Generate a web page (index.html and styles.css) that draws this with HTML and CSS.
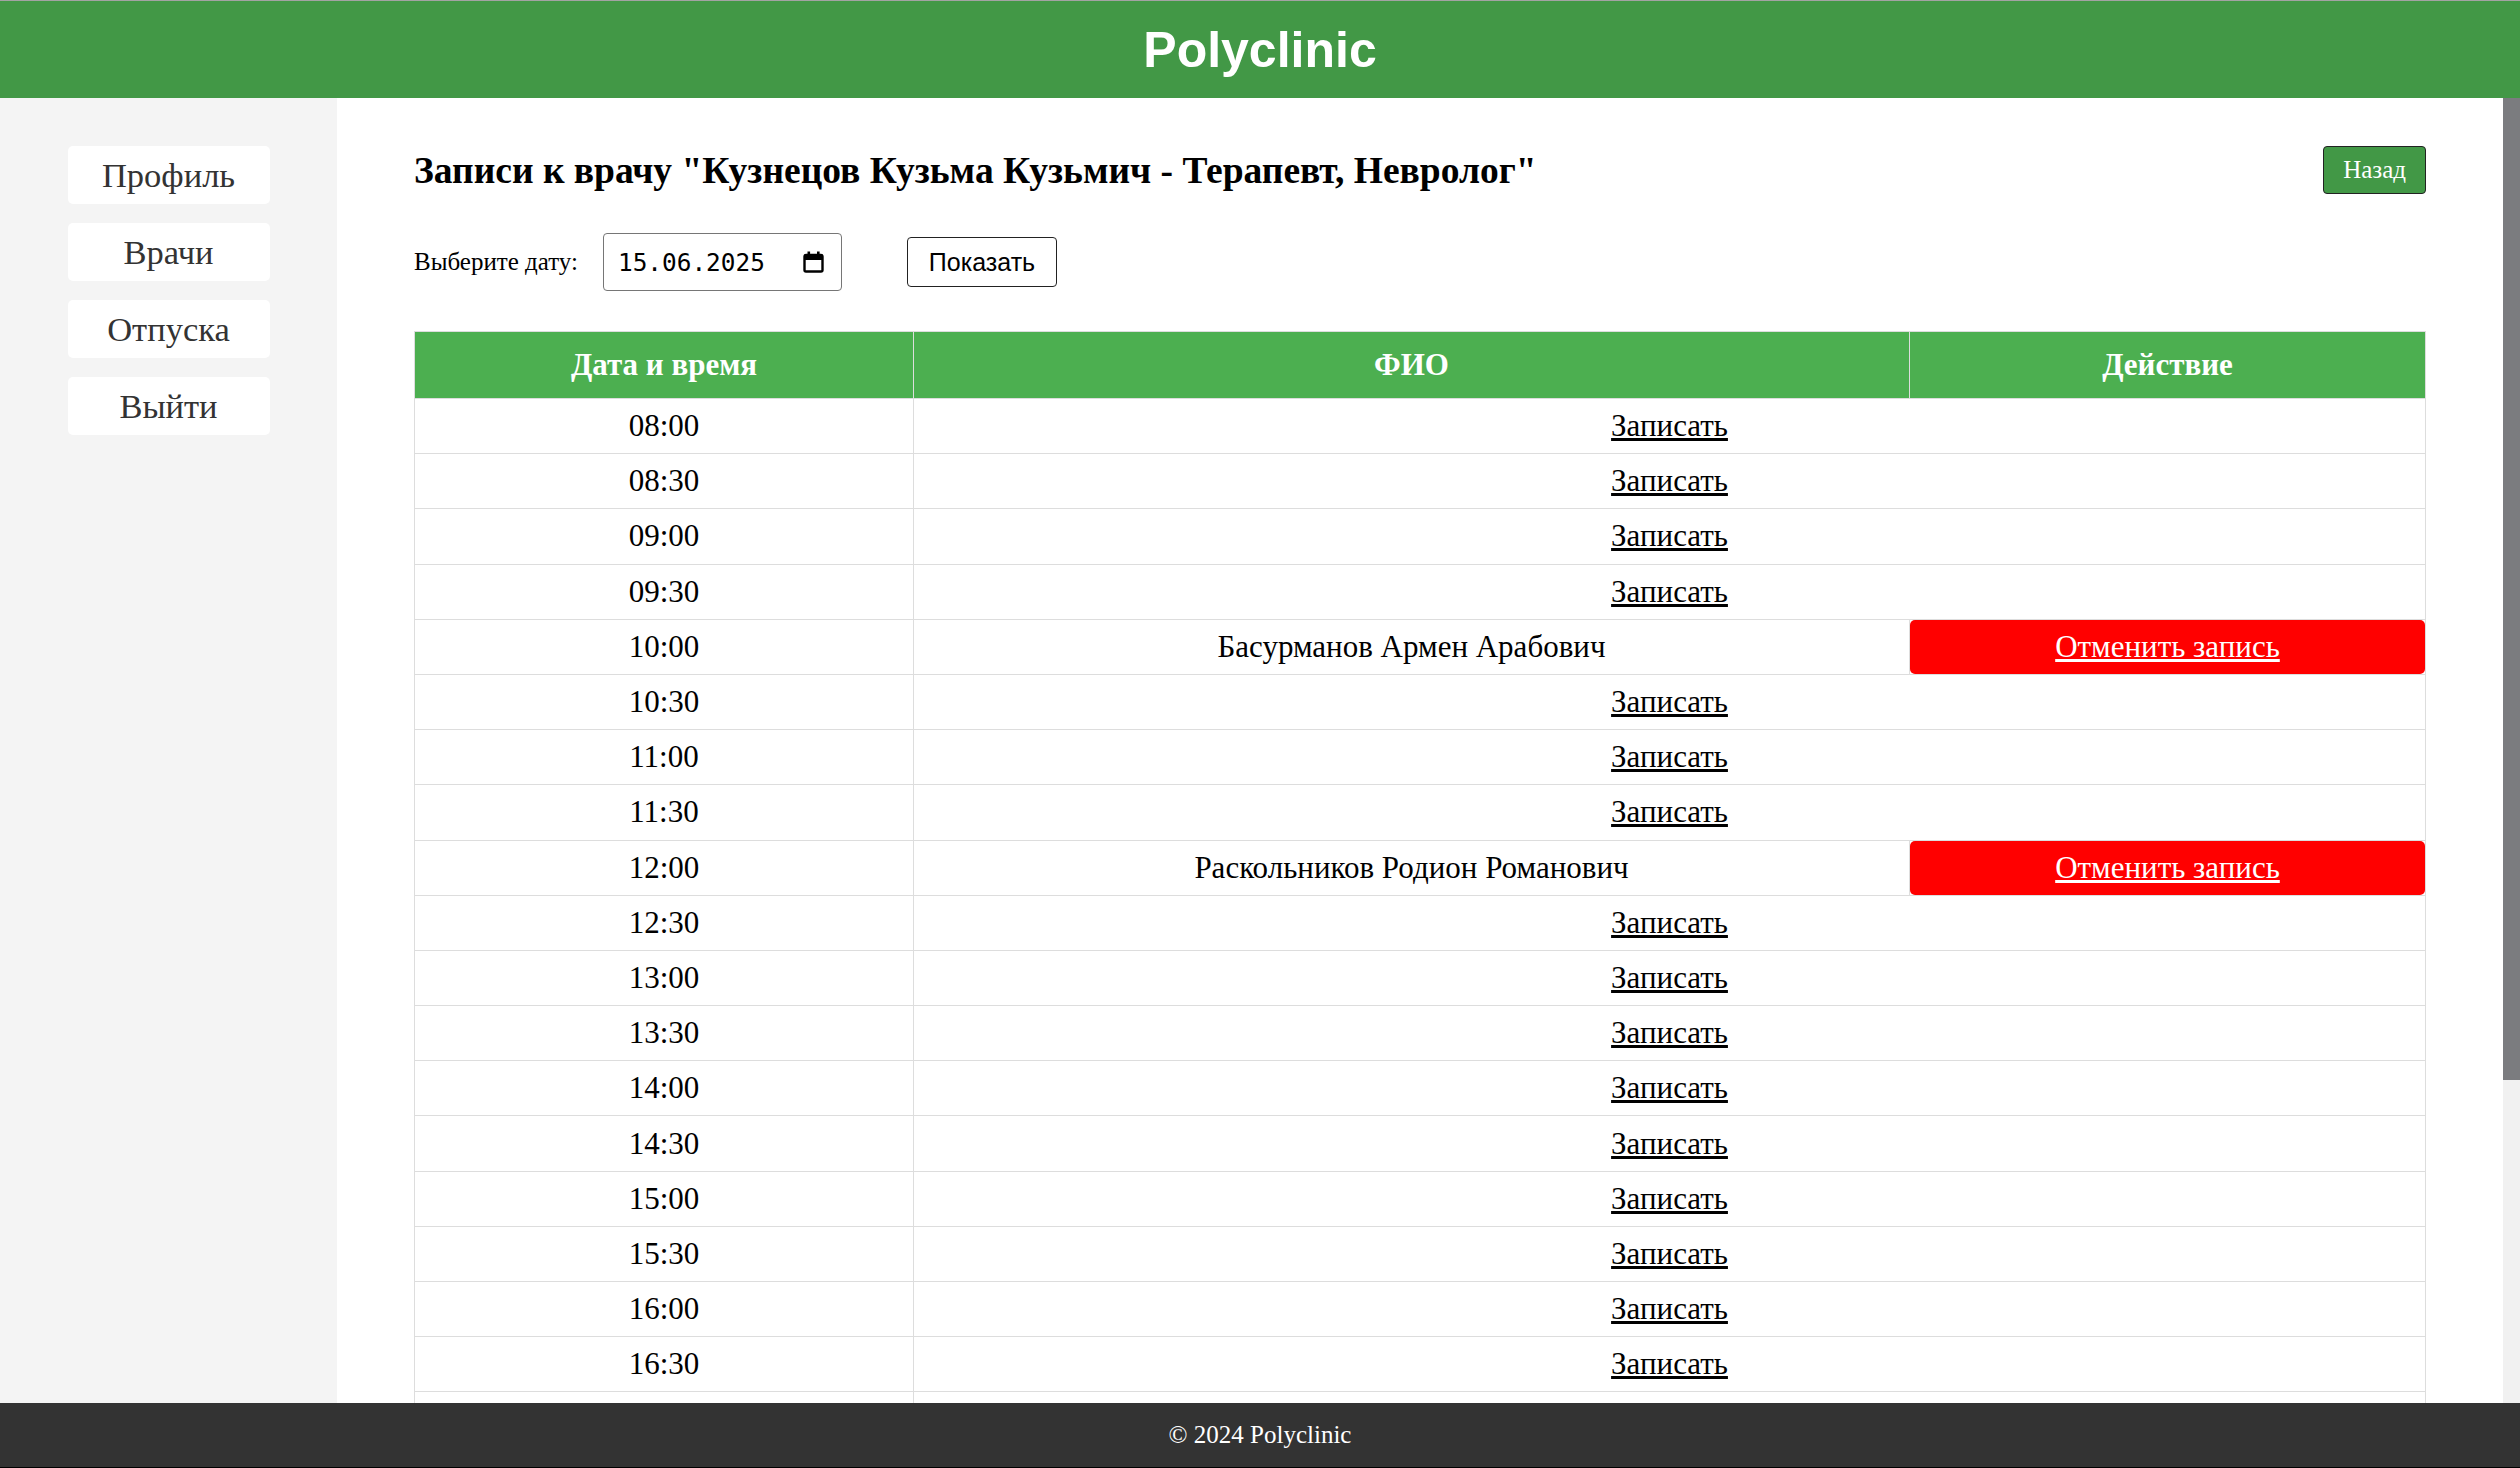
FILE: index.html
```html
<!DOCTYPE html>
<html lang="ru">
<head>
<meta charset="utf-8">
<title>Polyclinic</title>
<link rel="stylesheet" href="styles.css">
</head>
<body>
<header class="topbar">
  <h1 class="brand">Polyclinic</h1>
</header>
<div class="viewport">
  <div class="layout">
    <nav class="sidebar">
      <a class="nav-btn" href="#">Профиль</a>
      <a class="nav-btn" href="#">Врачи</a>
      <a class="nav-btn" href="#">Отпуска</a>
      <a class="nav-btn" href="#">Выйти</a>
    </nav>
    <main class="content">
      <div class="title-row">
        <h2 class="page-title">Записи к врачу "Кузнецов Кузьма Кузьмич - Терапевт, Невролог"</h2>
        <a class="back-btn" href="#">Назад</a>
      </div>
      <form class="date-form">
        <label class="date-label">Выберите дату:</label>
        <div class="date-input">
          <span class="date-value">15.06.2025</span>
          <svg class="cal-icon" width="21" height="22" viewBox="0 0 21 22">
            <rect x="1.5" y="4" width="18" height="16.5" rx="1.5" fill="none" stroke="#000" stroke-width="2.4"/>
            <rect x="1.5" y="4" width="18" height="5" fill="#000"/>
            <rect x="4.5" y="0.5" width="2.6" height="4" fill="#000"/>
            <rect x="14" y="0.5" width="2.6" height="4" fill="#000"/>
          </svg>
        </div>
        <button class="show-btn" type="button">Показать</button>
      </form>
      <table class="schedule">
        <colgroup>
          <col class="col-time"><col class="col-name"><col class="col-action">
        </colgroup>
        <thead>
          <tr><th>Дата и время</th><th>ФИО</th><th>Действие</th></tr>
        </thead>
        <tbody>
          <tr><td>08:00</td><td colspan="2"><a class="book" href="#">Записать</a></td></tr>
          <tr><td>08:30</td><td colspan="2"><a class="book" href="#">Записать</a></td></tr>
          <tr><td>09:00</td><td colspan="2"><a class="book" href="#">Записать</a></td></tr>
          <tr><td>09:30</td><td colspan="2"><a class="book" href="#">Записать</a></td></tr>
          <tr><td>10:00</td><td>Басурманов Армен Арабович</td><td class="action-cell"><a class="cancel" href="#">Отменить запись</a></td></tr>
          <tr><td>10:30</td><td colspan="2"><a class="book" href="#">Записать</a></td></tr>
          <tr><td>11:00</td><td colspan="2"><a class="book" href="#">Записать</a></td></tr>
          <tr><td>11:30</td><td colspan="2"><a class="book" href="#">Записать</a></td></tr>
          <tr><td>12:00</td><td>Раскольников Родион Романович</td><td class="action-cell"><a class="cancel" href="#">Отменить запись</a></td></tr>
          <tr><td>12:30</td><td colspan="2"><a class="book" href="#">Записать</a></td></tr>
          <tr><td>13:00</td><td colspan="2"><a class="book" href="#">Записать</a></td></tr>
          <tr><td>13:30</td><td colspan="2"><a class="book" href="#">Записать</a></td></tr>
          <tr><td>14:00</td><td colspan="2"><a class="book" href="#">Записать</a></td></tr>
          <tr><td>14:30</td><td colspan="2"><a class="book" href="#">Записать</a></td></tr>
          <tr><td>15:00</td><td colspan="2"><a class="book" href="#">Записать</a></td></tr>
          <tr><td>15:30</td><td colspan="2"><a class="book" href="#">Записать</a></td></tr>
          <tr><td>16:00</td><td colspan="2"><a class="book" href="#">Записать</a></td></tr>
          <tr><td>16:30</td><td colspan="2"><a class="book" href="#">Записать</a></td></tr>
          <tr><td>17:00</td><td colspan="2"><a class="book" href="#">Записать</a></td></tr>
          <tr><td>17:30</td><td colspan="2"><a class="book" href="#">Записать</a></td></tr>
          <tr><td>18:00</td><td colspan="2"><a class="book" href="#">Записать</a></td></tr>
          <tr><td>18:30</td><td colspan="2"><a class="book" href="#">Записать</a></td></tr>
          <tr><td>19:00</td><td colspan="2"><a class="book" href="#">Записать</a></td></tr>
          <tr><td>19:30</td><td colspan="2"><a class="book" href="#">Записать</a></td></tr>
          <tr><td>20:00</td><td colspan="2"><a class="book" href="#">Записать</a></td></tr>
        </tbody>
      </table>
    </main>
  </div>
  <div class="scrollbar"><div class="scroll-thumb"></div></div>
</div>
<footer class="footer">© 2024 Polyclinic</footer>
</body>
</html>
```
FILE: styles.css
```css
* { box-sizing: border-box; }
html, body { height: 100%; }
body {
  margin: 0;
  display: flex;
  flex-direction: column;
  font-family: "Liberation Serif", "Times New Roman", serif;
  color: #000;
  background: #fff;
  overflow: hidden;
}
.topbar {
  height: 98px;
  flex: 0 0 98px;
  background: #429846;
  border-top: 1px solid #a3a3a3;
  display: flex;
  align-items: center;
  justify-content: center;
}
.brand {
  margin: 0;
  color: #fff;
  font-family: "Liberation Sans", Arial, sans-serif;
  font-weight: bold;
  font-size: 50px;
  line-height: 1;
}
.viewport {
  flex: 1 1 auto;
  min-height: 0;
  display: flex;
}
.layout {
  flex: 1 1 auto;
  display: flex;
  overflow: hidden;
  min-height: 0;
}
.scrollbar {
  flex: 0 0 17px;
  background: #f1f1f1;
}
.scroll-thumb {
  height: 982px;
  background: #7b7c7f;
}
.sidebar {
  flex: 0 0 337px;
  background: #f4f4f4;
  padding-top: 48px;
  display: flex;
  flex-direction: column;
  align-items: center;
  gap: 19px;
}
.nav-btn {
  width: 202px;
  height: 58px;
  flex: 0 0 58px;
  background: #fff;
  border-radius: 5px;
  display: flex;
  align-items: center;
  justify-content: center;
  color: #333;
  text-decoration: none;
  font-size: 34.5px;
}
.content {
  flex: 1 1 auto;
  padding: 48px 78px 54px 77px;
}
.title-row {
  display: flex;
  align-items: center;
  justify-content: space-between;
  height: 48px;
}
.page-title {
  margin: 0;
  font-size: 37.5px;
  font-weight: bold;
  white-space: nowrap;
}
.back-btn {
  height: 48px;
  padding: 0 19px;
  background: #429846;
  border: 1.5px solid #222;
  border-radius: 4px;
  color: #fff;
  text-decoration: none;
  font-size: 25px;
  display: flex;
  align-items: center;
}
.date-form {
  margin-top: 39px;
  display: flex;
  align-items: center;
  height: 58px;
}
.date-label {
  font-size: 25px;
  margin-right: 25px;
}
.date-input {
  width: 239px;
  height: 58px;
  border: 1.5px solid #767676;
  border-radius: 4px;
  display: flex;
  align-items: center;
  padding: 0 17px 0 14px;
  justify-content: space-between;
}
.date-value {
  font-family: "DejaVu Sans Mono", monospace;
  font-size: 24.4px;
}
.cal-icon { display: block; }
.show-btn {
  margin-left: 65px;
  width: 150px;
  height: 50px;
  background: #fff;
  border: 1.5px solid #222;
  border-radius: 4px;
  font-family: "Liberation Sans", Arial, sans-serif;
  font-size: 25px;
  color: #000;
  padding: 0;
}
.schedule {
  margin-top: 40px;
  width: 100%;
  border-collapse: collapse;
  table-layout: fixed;
  font-size: 31px;
}
.col-time { width: 499px; }
.col-name { width: 996px; }
.col-action { width: 516px; }
.schedule th {
  background: #4caf50;
  color: #fff;
  font-weight: bold;
  height: 67px;
  border: 1px solid #ddd;
  padding: 0;
  text-align: center;
}
.schedule td {
  border: 1px solid #ddd;
  height: 55.2px;
  padding: 0;
  text-align: center;
}
.book { color: #000; }
.schedule td.action-cell { padding: 0; }
.cancel {
  display: flex;
  align-items: center;
  justify-content: center;
  height: 54px;
  background: #ff0000;
  border-radius: 5px;
  color: #fff;
}
.footer {
  flex: 0 0 65px;
  height: 65px;
  background: #333;
  color: #fff;
  display: flex;
  align-items: center;
  justify-content: center;
  font-size: 25px;
  border-bottom: 1px solid #000;
}
```
